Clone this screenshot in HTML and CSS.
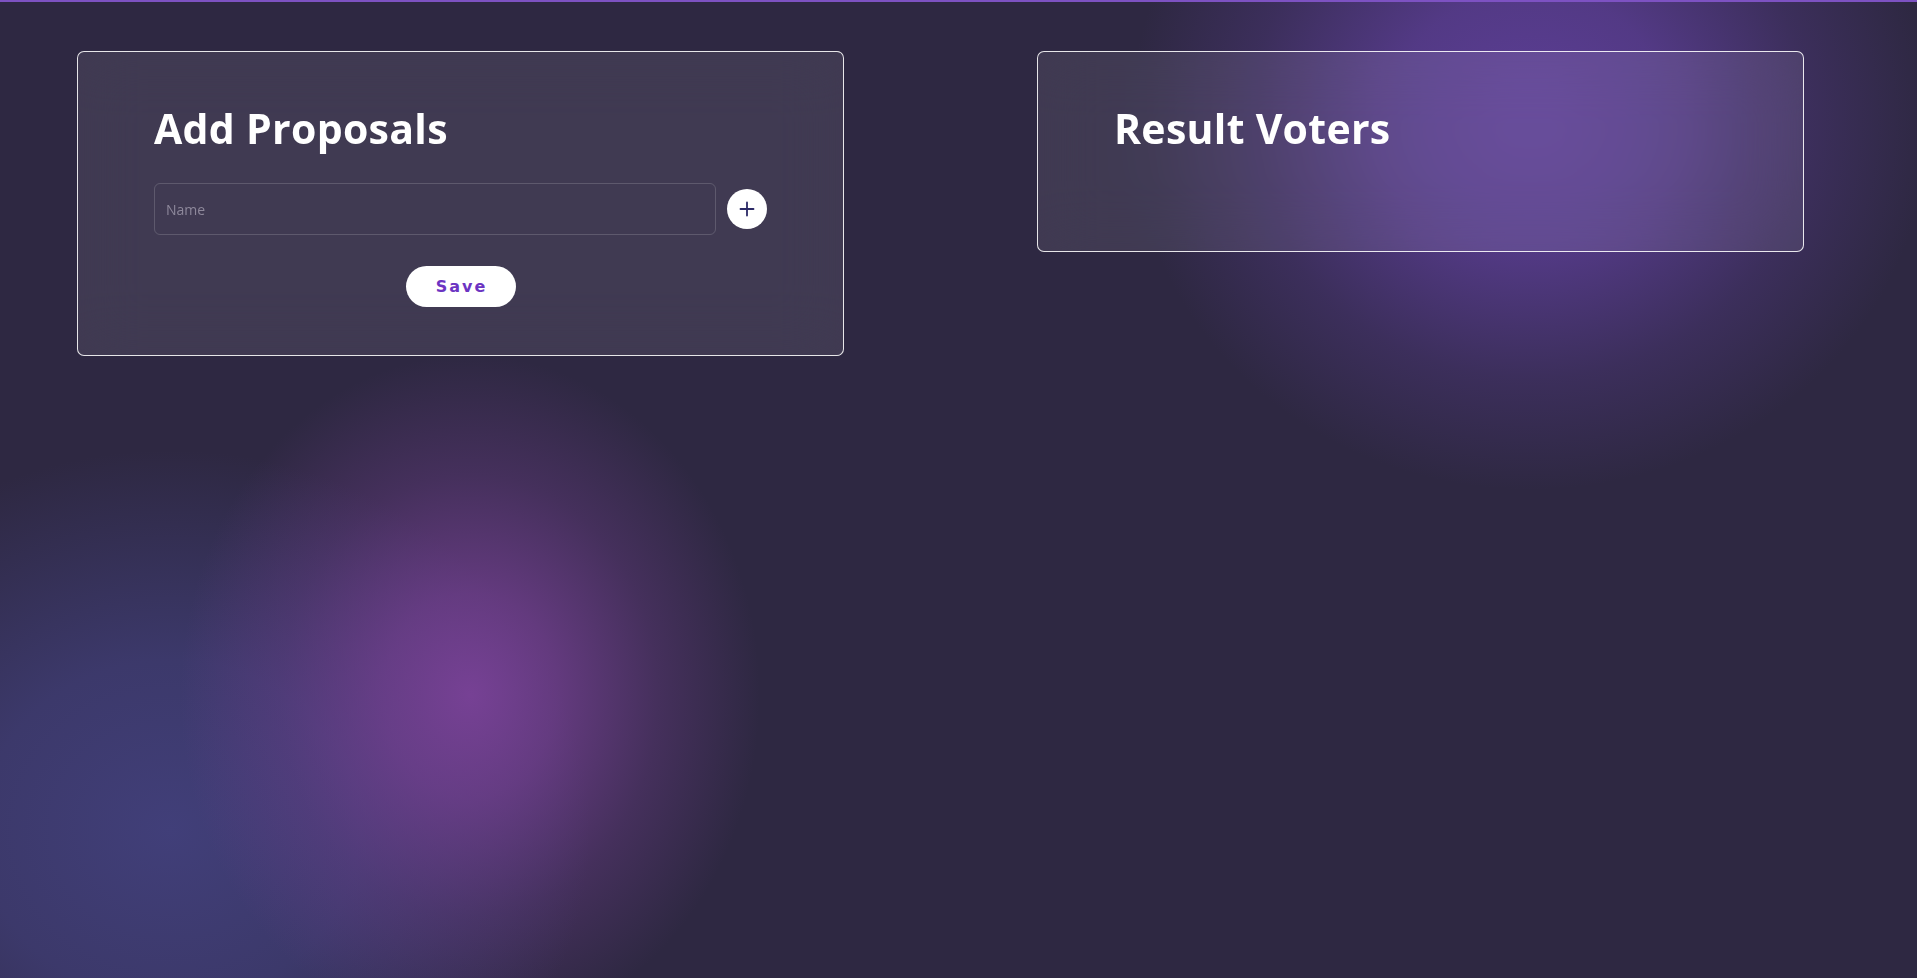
FILE: index.html
```html
<!DOCTYPE html>
<html lang="en">
<head>
<meta charset="utf-8">
<title>Proposals</title>
<link rel="stylesheet" href="styles.css">
</head>
<body>
<main class="page">
  <section class="card card-add">
    <h1 class="card-title">Add Proposals</h1>
    <div class="field-row">
      <input class="field" type="text" placeholder="Name">
      <button class="add-btn" type="button" aria-label="Add">
        <svg width="16" height="16" viewBox="0 0 16 16"><path d="M8 1.5V14.5M1.5 8H14.5" stroke="#2b2966" stroke-width="1.8" stroke-linecap="round" fill="none"/></svg>
      </button>
    </div>
    <button class="save-btn" type="button">Save</button>
  </section>
  <section class="card card-result">
    <h1 class="card-title">Result Voters</h1>
  </section>
</main>
</body>
</html>
```

FILE: styles.css
```css
* { box-sizing: border-box; }
html, body { margin: 0; padding: 0; }
body {
  min-height: 100vh;
  border-top: 2px solid #7d52c2;
  font-family: "Open Sans", "Noto Sans", sans-serif;
  color: #fff;
  background-color: #2e2842;
  background-image:
    radial-gradient(ellipse 290px 340px at 470px 695px, rgba(122,66,152,0.95) 0%, rgba(122,66,152,0.7) 30%, rgba(122,66,152,0.3) 65%, rgba(122,66,152,0) 100%),
    radial-gradient(ellipse 420px 380px at 170px 830px, rgba(66,64,124,0.95) 0%, rgba(66,64,124,0.7) 45%, rgba(66,64,124,0) 100%),
    radial-gradient(ellipse 400px 370px at 1530px 120px, rgba(92,62,150,1) 0%, rgba(92,62,150,0.8) 35%, rgba(92,62,150,0.3) 70%, rgba(92,62,150,0) 100%);
  background-repeat: no-repeat;
  overflow: hidden;
}
.page {
  display: flex;
  align-items: flex-start;
  gap: 193px;
  padding: 49px 0 0 77px;
}
.card {
  width: 767px;
  flex: none;
  border: 1px solid rgba(255,255,255,0.88);
  border-radius: 7px;
  background: rgba(255,255,255,0.085);
  backdrop-filter: blur(30px);
  padding: 49px 76px 48px;
  display: flex;
  flex-direction: column;
}
.card-result { padding-bottom: 96px; }
.card-title {
  margin: 0;
  font-size: 41px;
  line-height: 54px;
  font-weight: 700;
  color: #fff;
  letter-spacing: 0.3px;
}
.field-row {
  display: flex;
  align-items: center;
  gap: 11px;
  margin-top: 28px;
}
.field {
  flex: 1;
  height: 52px;
  background: transparent;
  border: 1px solid rgba(255,255,255,0.16);
  border-radius: 6px;
  padding: 0 11px;
  font-family: "Open Sans", "Noto Sans", sans-serif;
  font-size: 14px;
  color: #fff;
  outline: none;
}
.field::placeholder { color: #8e889b; }
.add-btn {
  width: 40px;
  height: 40px;
  flex: none;
  border: none;
  border-radius: 50%;
  background: #fff;
  display: flex;
  align-items: center;
  justify-content: center;
  padding: 0;
}
.save-btn {
  align-self: center;
  margin-top: 31px;
  width: 110px;
  height: 41px;
  border: none;
  border-radius: 21px;
  background: #fff;
  color: #6c34c2;
  font-family: "DejaVu Sans", sans-serif;
  font-weight: 700;
  font-size: 16px;
  letter-spacing: 2px;
  padding: 0 0 0 2px;
}
```
